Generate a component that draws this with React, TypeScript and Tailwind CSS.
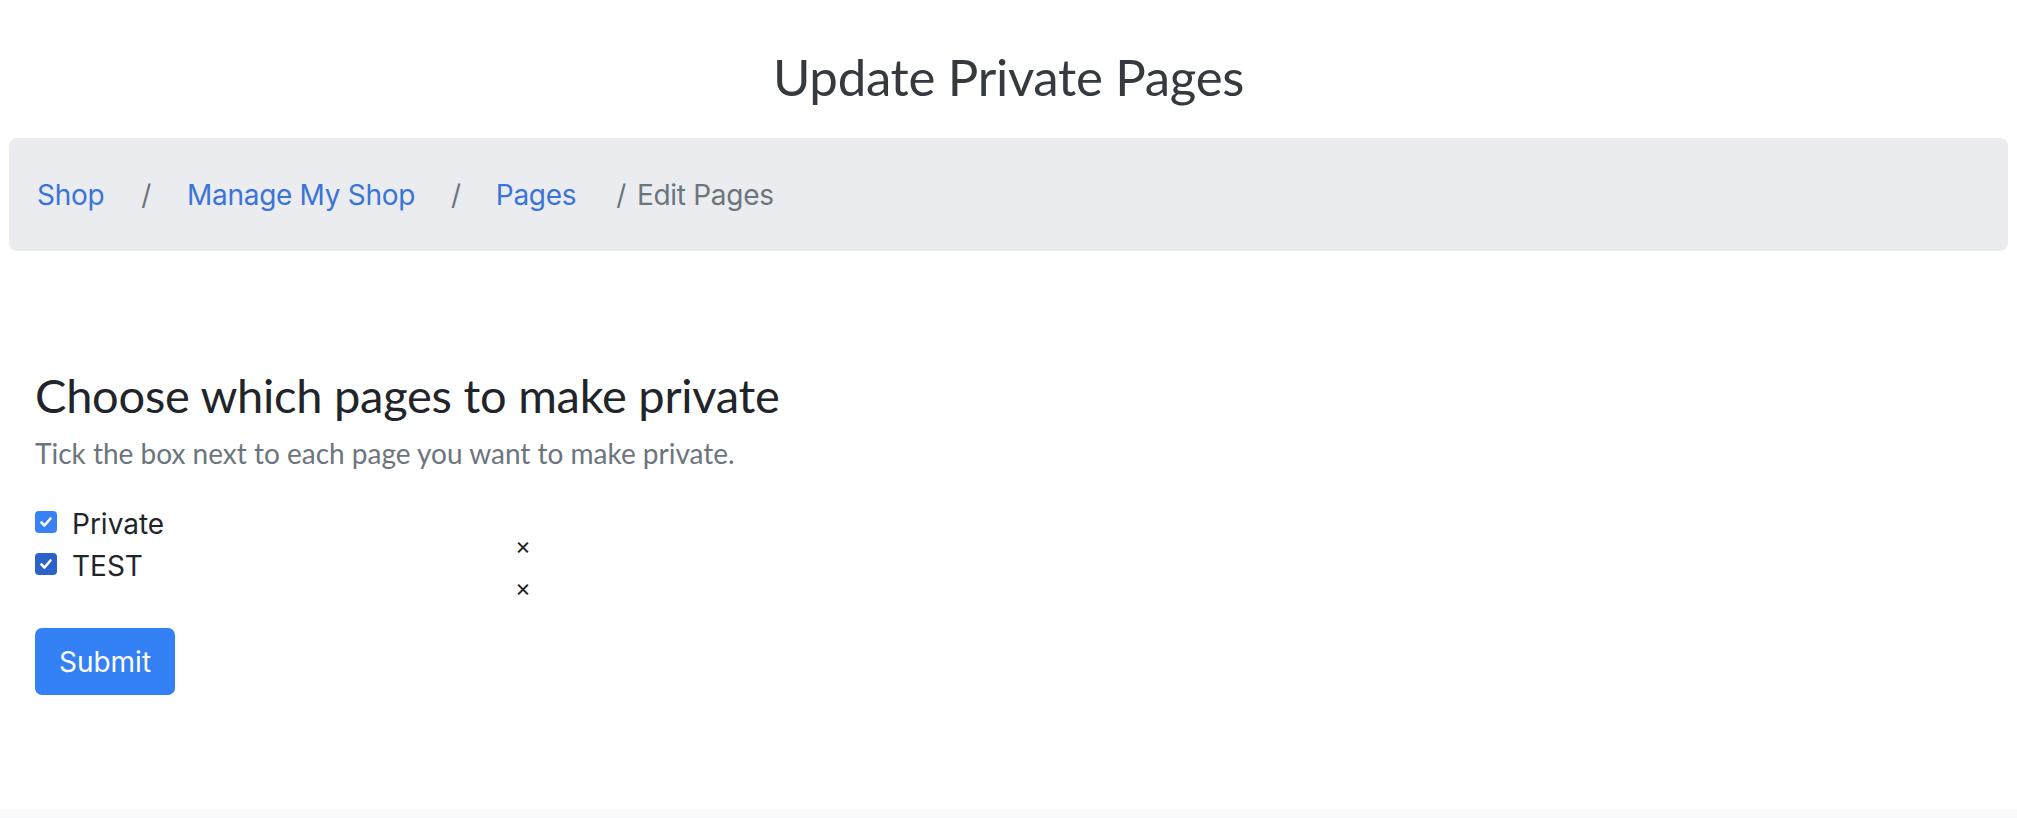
import React from "react";

function Check({ color }: { color: string }) {
  return (
    <span
      className="flex h-[22px] w-[22px] items-center justify-center rounded-[4px]"
      style={{ backgroundColor: color }}
    >
      <svg width="16" height="16" viewBox="0 0 16 16" fill="none">
        <path d="M3.5 8.5l3 3 6-7" stroke="#fff" strokeWidth="2.6" strokeLinecap="round" strokeLinejoin="round" />
      </svg>
    </span>
  );
}

export default function App() {
  const sys = { fontFamily: "Inter, 'Liberation Sans', sans-serif" };
  const lato = { fontFamily: "Lato, 'Liberation Sans', sans-serif" };
  return (
    <div className="flex h-[818px] flex-col bg-white">
      <main className="flex-1">
        <div className="h-[138px] pt-[46px] text-center">
          <h1
            className="text-[51px] font-normal leading-[62px] tracking-[-0.3px] text-[#343a40]"
            style={lato}
          >
            Update Private Pages
          </h1>
        </div>
        <nav
          className="mx-[9px] flex h-[113px] items-center rounded-[8px] bg-[#eaecf0] pl-[28px] text-[28px] leading-[42px] tracking-[-0.3px]"
          style={sys}
        >
          <a className="mr-[37px] text-[#3a74d8]">Shop</a>
          <span className="text-[#6c757d]">/</span>
          <a className="ml-[36px] mr-[36px] text-[#3a74d8]">Manage My Shop</a>
          <span className="text-[#6c757d]">/</span>
          <a className="ml-[35px] mr-[40px] text-[#3a74d8]">Pages</a>
          <span className="text-[#6c757d]">/</span>
          <span className="ml-[11px] text-[#6c757d]">Edit Pages</span>
        </nav>
        <section className="px-[35px] pt-[115px]">
          <h2
            className="text-[47px] font-normal leading-[58px] tracking-[-0.25px] text-[#212529]"
            style={lato}
          >
            Choose which pages to make private
          </h2>
          <p className="mt-[8px] text-[28px] leading-[42px] text-[#6c757d]" style={lato}>
            Tick the box next to each page you want to make private.
          </p>
          <div className="mt-[29px] flex">
            <div className="flex w-[480px] flex-col text-[28px] leading-[42px] text-[#212529]" style={sys}>
              <label className="flex h-[42px] items-center gap-[15px]">
                <span className="-translate-y-[2px]">
                  <Check color="#3880f6" />
                </span>
                <span>Private</span>
              </label>
              <label className="flex h-[42px] items-center gap-[15px]">
                <span className="-translate-y-[2px]">
                  <Check color="#2a62c9" />
                </span>
                <span>TEST</span>
              </label>
            </div>
            <div className="flex flex-col pt-[22px] text-[24px] leading-[42px] text-[#222]" style={sys}>
              <span>×</span>
              <span>×</span>
            </div>
          </div>
          <button
            className="mt-[19px] flex h-[67px] w-[140px] items-center justify-center rounded-[7px] bg-[#3381f5] text-[28px] text-white"
            style={sys}
          >
            Submit
          </button>
        </section>
      </main>
      <footer className="h-[9px] bg-[#f8f9fa]" />
    </div>
  );
}
